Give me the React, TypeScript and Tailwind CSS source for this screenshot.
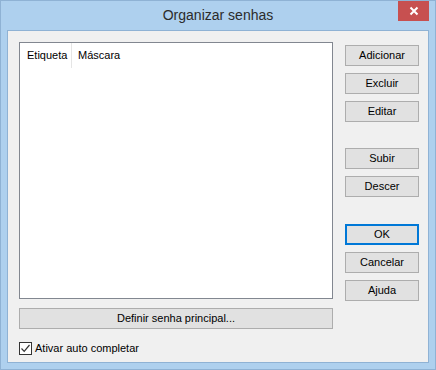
import React from 'react';

const font = { fontFamily: '"Liberation Sans", Arial, sans-serif' };

const Btn: React.FC<{ label: string; focused?: boolean; className?: string }> = ({ label, focused, className }) => (
  <div
    className={
      'flex h-[21px] w-[74px] items-center justify-center bg-[#e1e1e1] text-[11px] text-black ' +
      (focused ? 'border-2 border-[#0078d7] ' : 'border border-[#adadad] ') +
      (className ?? '')
    }
  >
    {label}
  </div>
);

export default function App() {
  return (
    <div className="flex h-[370px] w-[436px] flex-col border border-[#8fb2d4] bg-[#aed0ee]" style={font}>
      {/* title bar */}
      <div className="relative flex h-[29px] shrink-0 items-center justify-center">
        <span className="text-[14px] text-[#2b2b2b]">Organizar senhas</span>
        <div className="absolute right-[6px] top-0 flex h-[20px] w-[31px] items-center justify-center bg-[#c75050]">
          <svg width="10" height="10" viewBox="0 0 10 10">
            <path d="M1.5 1.5 L8.5 8.5 M8.5 1.5 L1.5 8.5" stroke="#fff" strokeWidth="2" />
          </svg>
        </div>
      </div>

      {/* client area */}
      <div className="mx-[6px] mb-[6px] flex flex-1 flex-col border border-[#8fb2d4] bg-[#f0f0f0] pl-[11px] pr-[9px] pt-[11px]">
        <div className="flex gap-[12px]">
          <div className="flex flex-col">
            <div className="h-[257px] w-[314px] border border-[#828790] bg-white">
              <div className="flex h-[25px] items-center text-[11px] text-black">
                <div className="flex h-full w-[52px] items-center border-r border-[#e5e5e5] pl-[7px]">Etiqueta</div>
                <div className="pl-[6px]">Máscara</div>
              </div>
            </div>
            <Btn label="Definir senha principal..." className="mt-[9px] !w-[314px]" />
          </div>

          <div className="mt-[3px] flex flex-col">
            <Btn label="Adicionar" />
            <Btn label="Excluir" className="mt-[7px]" />
            <Btn label="Editar" className="mt-[7px]" />
            <Btn label="Subir" className="mt-[26px]" />
            <Btn label="Descer" className="mt-[7px]" />
            <Btn label="OK" focused className="mt-[27px]" />
            <Btn label="Cancelar" className="mt-[7px]" />
            <Btn label="Ajuda" className="mt-[7px]" />
          </div>
        </div>

        <div className="mt-[11px] flex items-center gap-[3px]">
          <div className="flex h-[13px] w-[13px] items-center justify-center border border-[#333] bg-white">
            <svg width="11" height="11" viewBox="0 0 11 11">
              <path d="M1.5 5.5 L4.2 8.3 L9.5 2" fill="none" stroke="#333" strokeWidth="1.2" />
            </svg>
          </div>
          <span className="text-[11px] text-black">Ativar auto completar</span>
        </div>
      </div>
    </div>
  );
}
